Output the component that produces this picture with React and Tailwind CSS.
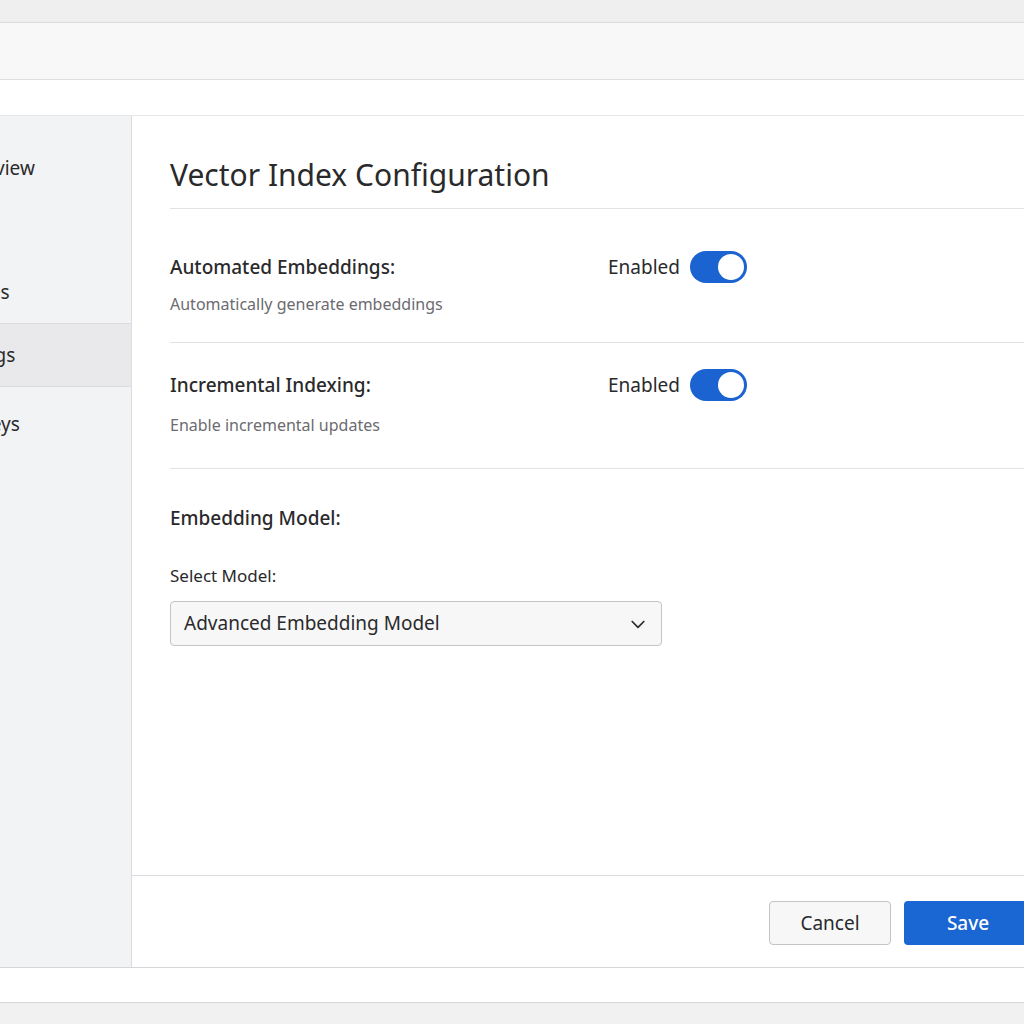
export default function App() {
    const Toggle = () => (
        <div className="w-[57px] h-[32px] rounded-full bg-[#1a63d1] flex items-center justify-end pr-[3px]">
            <div className="w-[26px] h-[26px] rounded-full bg-white"></div>
        </div>
    );

    return (
        <div className="w-[1024px] h-[1024px] bg-[#f1f1f2] overflow-hidden flex flex-col" style={{ fontFamily: '"Noto Sans", "Open Sans", sans-serif' }}>
            <div className="h-[23px] bg-[#efeff0] border-b border-[#dcdcde]"></div>
            <div className="h-[57px] bg-[#f8f8f8] border-b border-[#dedee0]"></div>
            <div className="h-[36px] bg-white border-b border-[#e6e6e8]"></div>
            <div className="h-[852px] flex bg-white border-b border-[#d6d6d8]">
                <div className="w-[132px] bg-[#f2f3f5] border-r border-[#dcdce0] flex flex-col text-[19px] text-[#2a2a2c] overflow-hidden">
                    <div className="h-[104px] pt-[38px] whitespace-nowrap -ml-[48px]">Overview</div>
                    <div className="h-[104px] pt-[58px] whitespace-nowrap -ml-[60px] border-b border-[#dcdce0]">Indexes</div>
                    <div className="h-[63px] flex items-center bg-[#e9e9ec] border-b border-[#dcdce0]">
                        <span className="whitespace-nowrap -ml-[57px]">Settings</span>
                    </div>
                    <div className="pt-[23px] whitespace-nowrap -ml-[56px]">API Keys</div>
                </div>
                <div className="flex-1 flex flex-col">
                    <div className="flex-1 pl-[38px]">
                        <div className="h-[93px] pt-[36px] border-b border-[#e3e3e5] text-[30px] text-[#2a2a2c]">Vector Index Configuration</div>
                        <div className="h-[134px] pt-[42px] border-b border-[#e3e3e5]">
                            <div className="flex items-center h-[32px]">
                                <div className="w-[438px] text-[19px] font-medium text-[#2a2a2c]">Automated Embeddings:</div>
                                <span className="text-[19px] text-[#2a2a2c] mr-[10px]">Enabled</span>
                                <Toggle />
                            </div>
                            <div className="text-[16px] leading-[22px] text-[#6b6b70] mt-[10px]">Automatically generate embeddings</div>
                        </div>
                        <div className="h-[126px] pt-[26px] border-b border-[#e3e3e5]">
                            <div className="flex items-center h-[32px]">
                                <div className="w-[438px] text-[19px] font-medium text-[#2a2a2c]">Incremental Indexing:</div>
                                <span className="text-[19px] text-[#2a2a2c] mr-[10px]">Enabled</span>
                                <Toggle />
                            </div>
                            <div className="text-[16px] leading-[22px] text-[#6b6b70] mt-[13px]">Enable incremental updates</div>
                        </div>
                        <div className="pt-[36px] text-[19px] leading-[26px] font-medium text-[#2a2a2c]">Embedding Model:</div>
                        <div className="mt-[33px] text-[17px] leading-[23px] text-[#2a2a2c]">Select Model:</div>
                        <div className="mt-[14px] w-[492px] h-[45px] rounded-[4px] border border-[#c4c4c8] bg-[#f7f7f8] flex items-center justify-between px-[13px] text-[19px] text-[#2a2a2c]">
                            <span>Advanced Embedding Model</span>
                            <svg width="20" height="20" viewBox="0 0 24 24" fill="none" stroke="#2a2a2c" strokeWidth="2" strokeLinecap="round" strokeLinejoin="round"><path d="M5 9l7 7 7-7" /></svg>
                        </div>
                    </div>
                    <div className="h-[92px] border-t border-[#dcdce0] flex items-start pt-[25px] justify-end gap-[13px] -mr-[8px]">
                        <button className="w-[122px] h-[44px] rounded-[4px] border border-[#c4c4c8] bg-[#f7f7f8] text-[19px] text-[#2a2a2c]">Cancel</button>
                        <button className="w-[128px] h-[44px] rounded-[4px] bg-[#1a66d2] text-[19px] text-white font-medium">Save</button>
                    </div>
                </div>
            </div>
            <div className="h-[35px] bg-white border-b border-[#d6d6d8]"></div>
        </div>
    );
}
